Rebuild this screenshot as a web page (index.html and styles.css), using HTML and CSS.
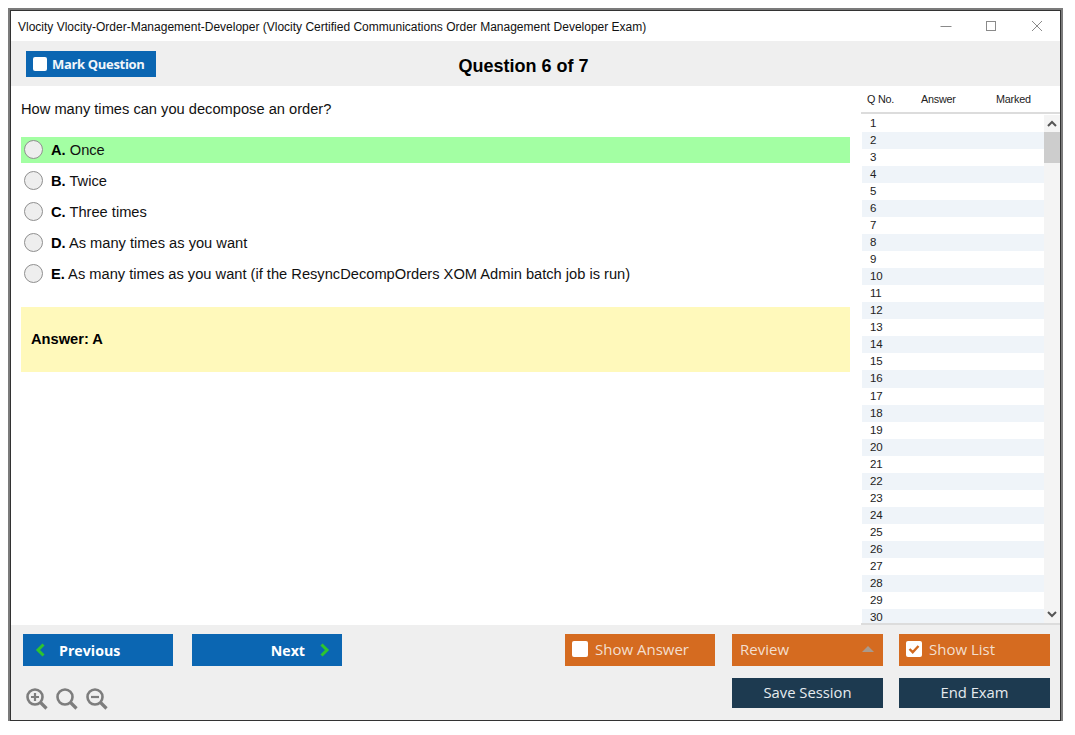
FILE: index.html
```html
<!DOCTYPE html>
<html lang="en">
<head>
<meta charset="utf-8">
<title>Exam</title>
<link rel="stylesheet" href="styles.css">
</head>
<body>
<div class="window">
  <div class="titlebar">
    <span class="title">Vlocity Vlocity-Order-Management-Developer (Vlocity Certified Communications Order Management Developer Exam)</span>
    <div class="controls">
      <svg class="min" width="12" height="12" viewBox="0 0 12 12"><path d="M0.5 6.5H11.5" stroke="#8a8a8a" fill="none"/></svg>
      <svg width="12" height="12" viewBox="0 0 12 12"><rect x="1.5" y="1.5" width="9" height="9" stroke="#8a8a8a" fill="none"/></svg>
      <svg width="12" height="12" viewBox="0 0 12 12"><path d="M1 1L11 11M11 1L1 11" stroke="#8a8a8a" fill="none"/></svg>
    </div>
  </div>
  <div class="header">
    <button class="mark"><span class="box"></span>Mark Question</button>
    <h1 class="qtitle">Question 6 of 7</h1>
  </div>
  <div class="main">
    <div class="content">
      <p class="question">How many times can you decompose an order?</p>
      <div class="option correct"><span class="radio"></span><span><b>A.</b> Once</span></div>
      <div class="option"><span class="radio"></span><span><b>B.</b> Twice</span></div>
      <div class="option"><span class="radio"></span><span><b>C.</b> Three times</span></div>
      <div class="option"><span class="radio"></span><span><b>D.</b> As many times as you want</span></div>
      <div class="option"><span class="radio"></span><span><b>E.</b> As many times as you want (if the ResyncDecompOrders XOM Admin batch job is run)</span></div>
      <div class="answer">Answer: A</div>
    </div>
    <aside class="side">
      <div class="side-head"><span class="c1">Q No.</span><span class="c2">Answer</span><span class="c3">Marked</span></div>
      <div class="side-body">
        <div class="rows">
          <div class="row">1</div><div class="row">2</div><div class="row">3</div><div class="row">4</div><div class="row">5</div>
          <div class="row">6</div><div class="row">7</div><div class="row">8</div><div class="row">9</div><div class="row">10</div>
          <div class="row">11</div><div class="row">12</div><div class="row">13</div><div class="row">14</div><div class="row">15</div>
          <div class="row">16</div><div class="row">17</div><div class="row">18</div><div class="row">19</div><div class="row">20</div>
          <div class="row">21</div><div class="row">22</div><div class="row">23</div><div class="row">24</div><div class="row">25</div>
          <div class="row">26</div><div class="row">27</div><div class="row">28</div><div class="row">29</div><div class="row">30</div>
        </div>
        <div class="scrollbar">
          <svg class="arrow" width="16" height="17" viewBox="0 0 16 17"><path d="M4 11L8 7L12 11" stroke="#555" stroke-width="2" fill="none"/></svg>
          <div class="thumb"></div>
          <svg class="arrow bottom" width="16" height="17" viewBox="0 0 16 17"><path d="M4 6L8 10L12 6" stroke="#555" stroke-width="2" fill="none"/></svg>
        </div>
      </div>
    </aside>
  </div>
  <div class="footer">
    <div class="foot-row">
      <div class="nav">
        <button class="btn blue prev">
          <svg width="11" height="14" viewBox="0 0 11 14"><path d="M8.5 1.5L3 7L8.5 12.5" stroke="#2ec52e" stroke-width="3" fill="none"/></svg>
          Previous
        </button>
        <button class="btn blue next">
          Next
          <svg width="11" height="14" viewBox="0 0 11 14"><path d="M2.5 1.5L8 7L2.5 12.5" stroke="#2ec52e" stroke-width="3" fill="none"/></svg>
        </button>
      </div>
      <div class="actions">
        <button class="btn orange first"><span class="box big"></span>Show Answer</button>
        <button class="btn orange review wide">Review<svg width="12" height="6" viewBox="0 0 12 6"><path d="M0 6L6 0L12 6Z" fill="#a99a8d"/></svg></button>
        <button class="btn orange wide"><span class="box big"><svg width="16" height="16" viewBox="0 0 16 16"><path d="M3.5 8L6.7 11.2L12.5 5" stroke="#d2691e" stroke-width="2.4" fill="none"/></svg></span>Show List</button>
      </div>
    </div>
    <div class="foot-row second">
      <div class="zoom">
        <svg width="22" height="22" viewBox="0 0 22 22"><circle cx="9" cy="9" r="7.5" stroke="#7d7d7d" stroke-width="2.6" fill="none"/><path d="M14.5 14.5L20.5 20.5" stroke="#7d7d7d" stroke-width="3.2"/><path d="M5 9H13M9 5V13" stroke="#7d7d7d" stroke-width="2.2"/></svg>
        <svg width="22" height="22" viewBox="0 0 22 22"><circle cx="9" cy="9" r="7.5" stroke="#7d7d7d" stroke-width="2.6" fill="none"/><path d="M14.5 14.5L20.5 20.5" stroke="#7d7d7d" stroke-width="3.2"/></svg>
        <svg width="22" height="22" viewBox="0 0 22 22"><circle cx="9" cy="9" r="7.5" stroke="#7d7d7d" stroke-width="2.6" fill="none"/><path d="M14.5 14.5L20.5 20.5" stroke="#7d7d7d" stroke-width="3.2"/><path d="M5 9H13" stroke="#7d7d7d" stroke-width="2.2"/></svg>
      </div>
      <div class="actions">
        <button class="btn dark wide">Save Session</button>
        <button class="btn dark wide">End Exam</button>
      </div>
    </div>
  </div>
</div>
</body>
</html>
```
FILE: styles.css
```css
* { box-sizing: border-box; }
html, body { margin: 0; padding: 0; background: #fff; }
body { padding: 10px 0 0 10px; font-family: "Liberation Sans", Arial, sans-serif; color: #000; }
button { font: inherit; border: 0; padding: 0; margin: 0; }
.window {
  width: 1051px; height: 711px;
  border: 1px solid #333;
  box-shadow: 0 0 0 2px #7b7b7b;
  display: flex; flex-direction: column;
  background: #fff;
}
.titlebar { height: 30px; flex: none; display: flex; align-items: center; justify-content: space-between; padding: 1px 17px 0 7px; }
.title { font-size: 12px; color: #111; white-space: nowrap; }
.controls { display: flex; gap: 34px; margin-top: -1px; }
.min { margin-right: -1px; }
.header { height: 45px; flex: none; background: #efefef; position: relative; display: flex; align-items: flex-start; padding: 10px 0 0 15px; }
.mark {
  width: 130px; height: 26px; background: #0b66b2; color: #f2f6fa;
  font-family: "Open Sans", sans-serif; font-weight: 700; font-size: 13px;
  display: flex; align-items: center; gap: 5px; padding-left: 7px;
  letter-spacing: -0.025em;
}
.box { width: 14px; height: 14px; border-radius: 2px; background: #fff; flex: none; display: inline-block; }
.box.big { width: 16px; height: 16px; margin-right: 7px; display: flex; }
.qtitle { position: absolute; left: 0; right: 24px; top: 14px; margin: 0; font-size: 18px; line-height: 22px; font-weight: 700; text-align: center; }
.main { flex: 1; min-height: 0; display: flex; }
.content { flex: 1; min-width: 0; padding: 14px 11px 0 10px; }
.question { margin: 0 0 19px; font-size: 14.67px; line-height: 18px; color: #111; }
.option { height: 26px; margin-bottom: 5px; display: flex; align-items: center; gap: 8px; padding-left: 3px; font-size: 14.67px; color: #111; }
.option b { color: #000; }
.correct { background: #a3ffa3; }
.radio { width: 19px; height: 19px; border-radius: 50%; background: #eee; border: 1px solid #8f8f8f; flex: none; margin-bottom: 1px; }
.answer { margin-top: 20px; height: 65px; background: #fff9bb; display: flex; align-items: center; padding: 0 0 2px 10px; font-size: 14.67px; font-weight: 700; }
.side { width: 199px; flex: none; display: flex; flex-direction: column; margin-top: 1px; }
.side-head { height: 27px; flex: none; display: flex; align-items: center; padding-bottom: 2px; border-bottom: 2px solid #dcdcdc; font-size: 10.8px; color: #222; letter-spacing: -0.02em; }
.c1 { margin-left: 6px; width: 54px; }
.c2 { width: 75px; }
.side-body { flex: 1; min-height: 0; display: flex; overflow: hidden; border-bottom: 2px solid #dcdcdc; margin-top: 1px; }
.rows { flex: 1; min-width: 0; padding-left: 1px; overflow: hidden; }
.row { height: 17.04px; line-height: 17px; font-size: 11.5px; padding-left: 8px; color: #222; letter-spacing: -0.02em; }
.row:nth-child(even) { background: #eff4f9; }
.scrollbar { width: 16px; flex: none; position: relative; background: #f4f4f4; }
.arrow { display: block; }
.arrow.bottom { position: absolute; bottom: 0; left: 0; }
.thumb { height: 31px; background: #cdcdcd; }
.footer { height: 95px; flex: none; background: #efefef; padding: 9px 10px 0 12px; }
.foot-row { display: flex; justify-content: space-between; height: 32px; }
.foot-row.second { height: 30px; margin-top: 12px; align-items: flex-end; }
.nav { display: flex; gap: 19px; }
.actions { display: flex; gap: 16px; }
.btn { width: 150px; height: 32px; display: flex; align-items: center; font-family: "Open Sans", sans-serif; font-size: 15px; color: #fff; padding-bottom: 2px; }
.wide { width: 151px; }
.first { margin-right: 1px; }
.blue { background: #0b66b2; font-weight: 700; font-size: 14.2px; padding-bottom: 0; }
.prev { padding-left: 12px; gap: 13px; }
.next { justify-content: flex-end; padding-right: 12px; gap: 14px; }
.orange { background: #d56b20; color: #f3dfcf; padding-left: 7px; }
.review { justify-content: space-between; padding-right: 9px; padding-left: 8px; }
.dark { background: #1d3a50; color: #e6ebef; justify-content: center; height: 30px; font-size: 14.8px; }
.zoom { display: flex; gap: 8px; padding-left: 3px; margin-bottom: -2px; }
```
